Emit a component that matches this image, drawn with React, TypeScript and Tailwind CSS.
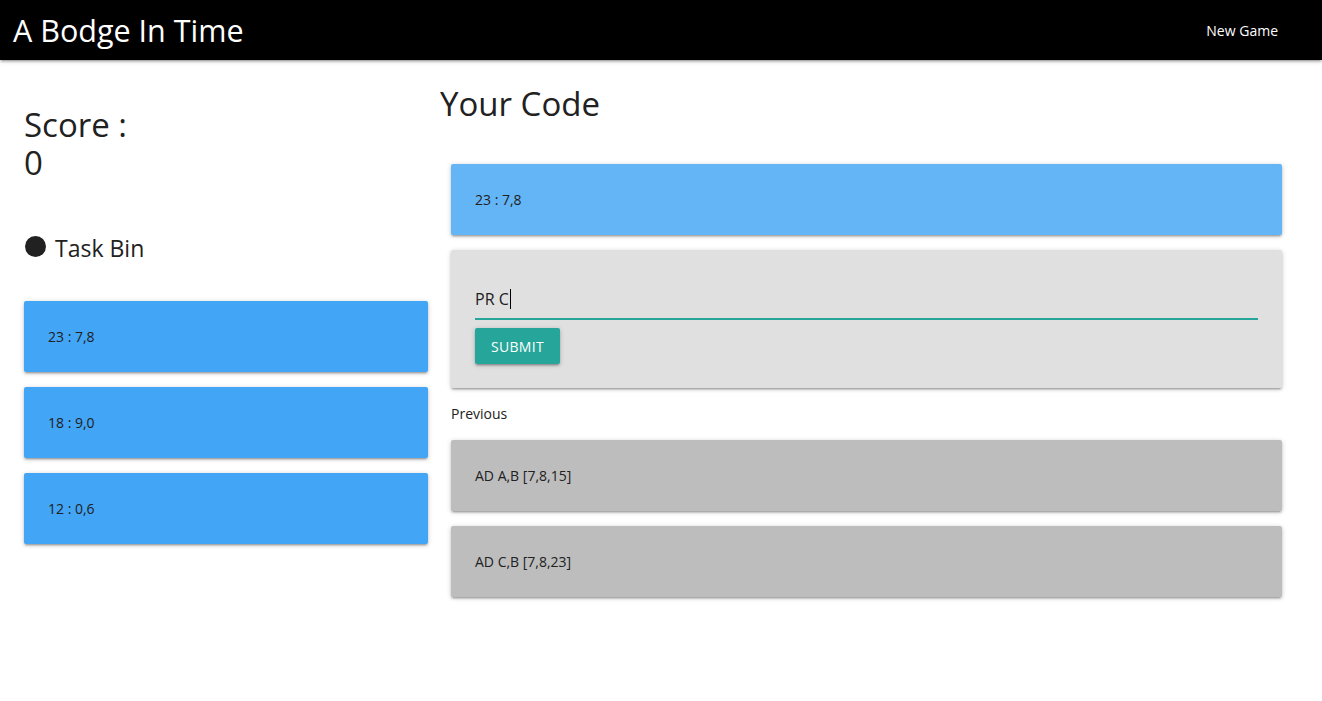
import React from 'react';

const font = { fontFamily: '"Open Sans", "Noto Sans", sans-serif' };

const cardShadow =
    'shadow-[0_2px_2px_0_rgba(0,0,0,0.14),0_3px_1px_-2px_rgba(0,0,0,0.12),0_1px_5px_0_rgba(0,0,0,0.2)]';

const tasks = ['23 : 7,8', '18 : 9,0', '12 : 0,6'];
const previous = ['AD A,B [7,8,15]', 'AD C,B [7,8,23]'];

const Card: React.FC<{ color: string; children: React.ReactNode }> = ({ color, children }) => (
    <div className={`${color} ${cardShadow} rounded-[2px] h-[71px] flex items-center px-6 text-[14px] text-[#212121]`}>
        {children}
    </div>
);

export default function App() {
    return (
        <div className="min-h-[701px] bg-white text-[#212121]" style={font}>
            <nav className={`h-[60px] bg-black flex items-center justify-between pl-[13px] pr-[44px] ${cardShadow}`}>
                <span className="text-white text-[30.5px] leading-none">A Bodge In Time</span>
                <span className="text-white text-[14px]">New Game</span>
            </nav>

            <div className="flex">
                {/* task bin column */}
                <div className="w-[428px] pl-6 shrink-0">
                    <div className="mt-[46px] text-[33px] leading-[38px]">
                        <div>Score :</div>
                        <div>0</div>
                    </div>
                    <div className="mt-[51px] flex items-center gap-[9px] pl-px">
                        <span className="w-[21px] h-[21px] rounded-full bg-[#212121] inline-block -mt-[3px]" />
                        <span className="text-[23px] leading-[30px]">Task Bin</span>
                    </div>
                    <div className="mt-[38px] flex flex-col gap-[15px]">
                        {tasks.map(t => (
                            <Card key={t} color="bg-[#42a5f5]">{t}</Card>
                        ))}
                    </div>
                </div>

                {/* code column */}
                <div className="flex-1 pl-[23px] pr-[40px]">
                    <h4 className="mt-[24px] -ml-[11px] text-[33px] leading-[40px]">Your Code</h4>
                    <div className="mt-[40px] flex flex-col gap-[15px]">
                        <Card color="bg-[#64b5f6]">23 : 7,8</Card>
                        <div className={`bg-[#e0e0e0] ${cardShadow} rounded-[2px] h-[138px] px-6 pt-[29px]`}>
                            <div className="border-b-2 border-[#26a69a] h-[41px] flex items-center text-[16px]">
                                PR C<span className="inline-block w-px h-[20px] bg-black ml-px" />
                            </div>
                            <button
                                className={`mt-[8px] h-[36px] px-4 bg-[#26a69a] text-white text-[14px] uppercase tracking-[0.3px] rounded-[2px] ${cardShadow}`}
                            >
                                Submit
                            </button>
                        </div>
                    </div>
                    <p className="mt-[16px] text-[14px] leading-5">Previous</p>
                    <div className="mt-[16px] flex flex-col gap-[15px]">
                        {previous.map(p => (
                            <Card key={p} color="bg-[#bdbdbd]">{p}</Card>
                        ))}
                    </div>
                </div>
            </div>
        </div>
    );
}
